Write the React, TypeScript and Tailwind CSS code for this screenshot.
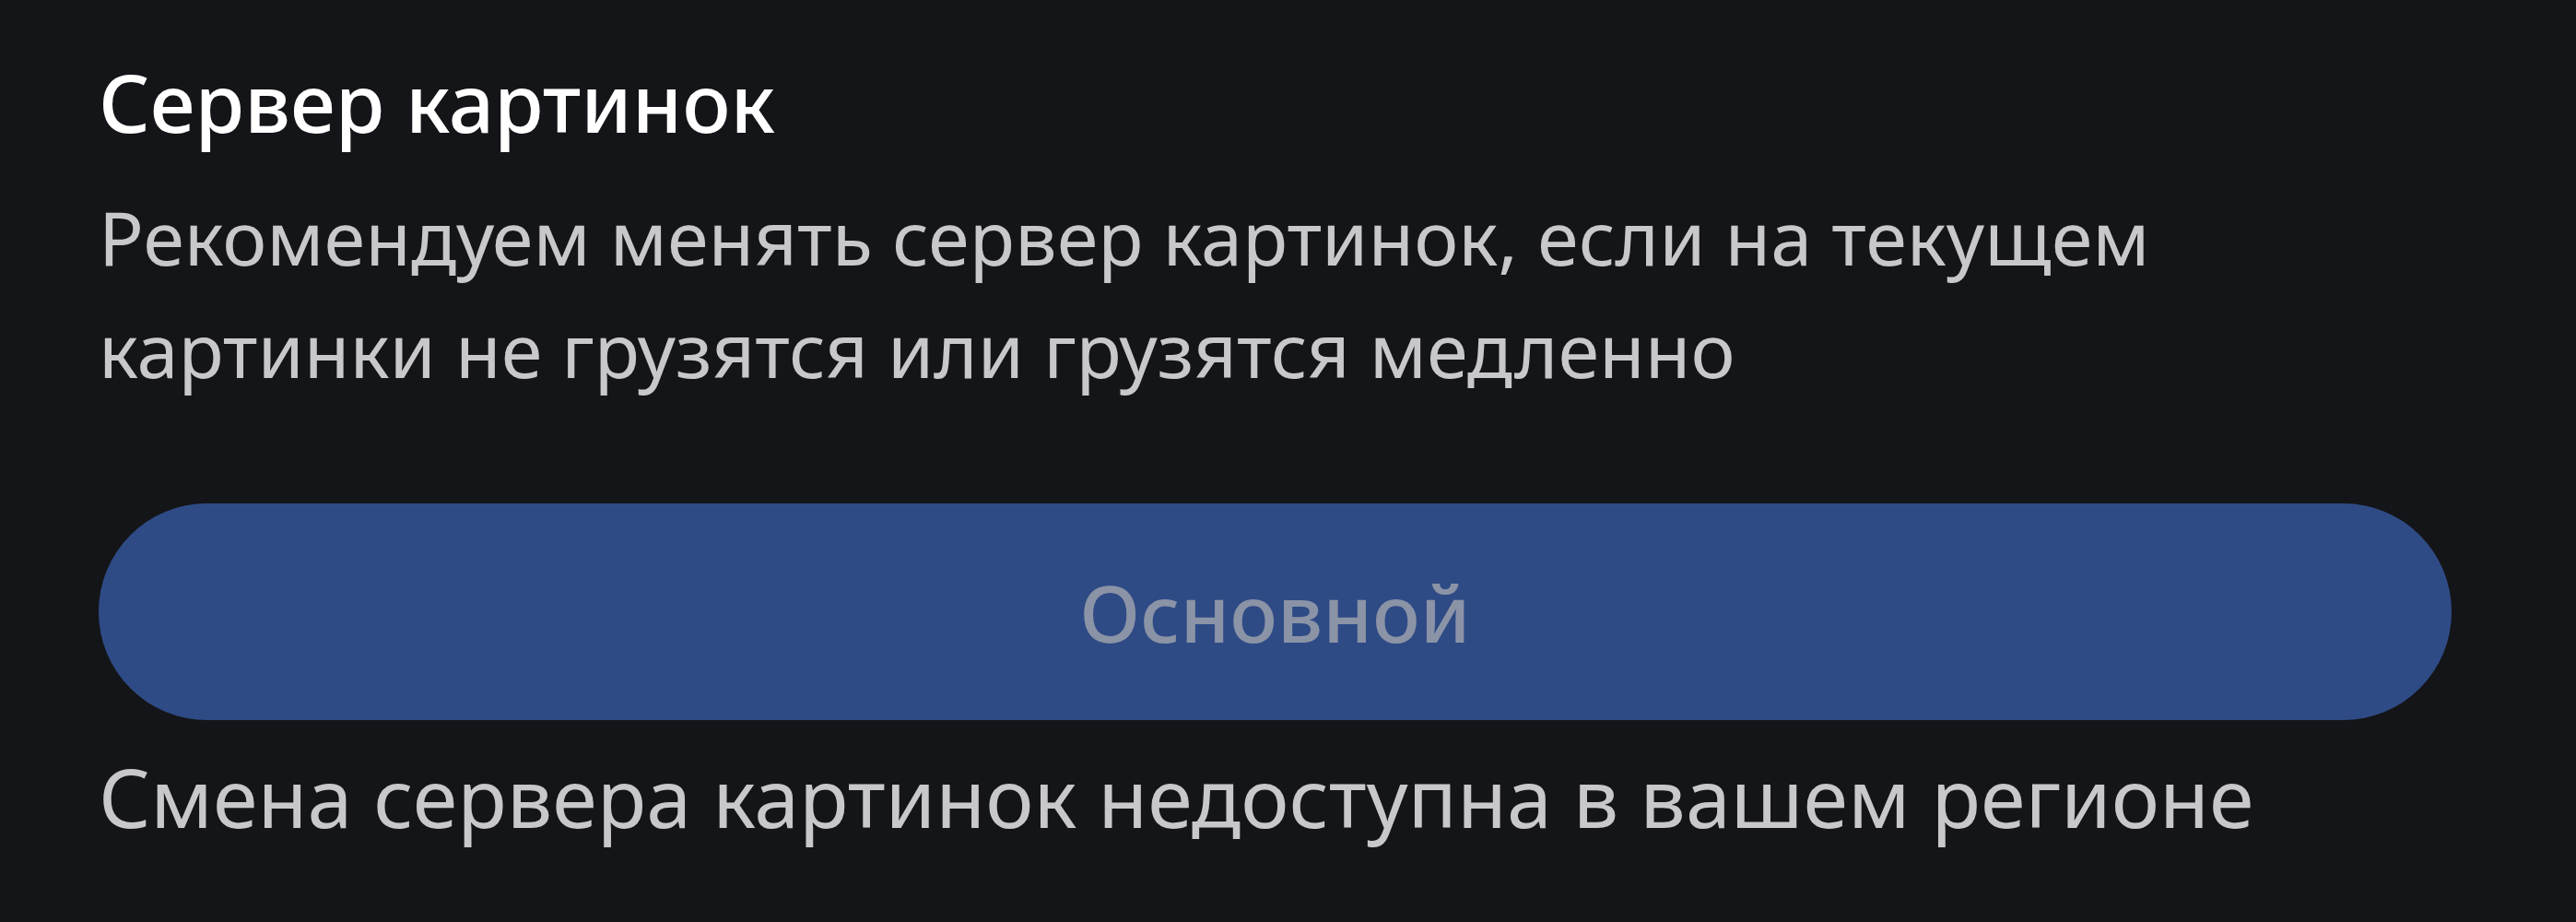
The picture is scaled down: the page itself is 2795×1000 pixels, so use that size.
export default function App() {
  return (
    <div
      className="min-h-screen w-full bg-[#141518] pl-[107px] pr-[135px]"
      style={{ fontFamily: '"Noto Sans", "Open Sans", sans-serif' }}
    >
      <div className="flex flex-col pt-[60px]">
        <h2 className="text-[87px] leading-[100px] font-medium text-white">
          Сервер картинок
        </h2>
        <p className="mt-[36px] max-w-[2300px] text-[81px] leading-[122px] text-[#c8c8ca]">
          Рекомендуем менять сервер картинок, если на текущем картинки не
          грузятся или грузятся медленно
        </p>
        <button
          disabled
          className="mt-[106px] flex h-[235px] w-full items-center justify-center rounded-full bg-[#2f4b86] text-[86px] font-medium text-[#8b93a6]"
        >
          Основной
        </button>
        <p className="mt-[22px] text-[88px] leading-[122px] text-[#c8c8ca]">
          Смена сервера картинок недоступна в вашем регионе
        </p>
      </div>
    </div>
  );
}
